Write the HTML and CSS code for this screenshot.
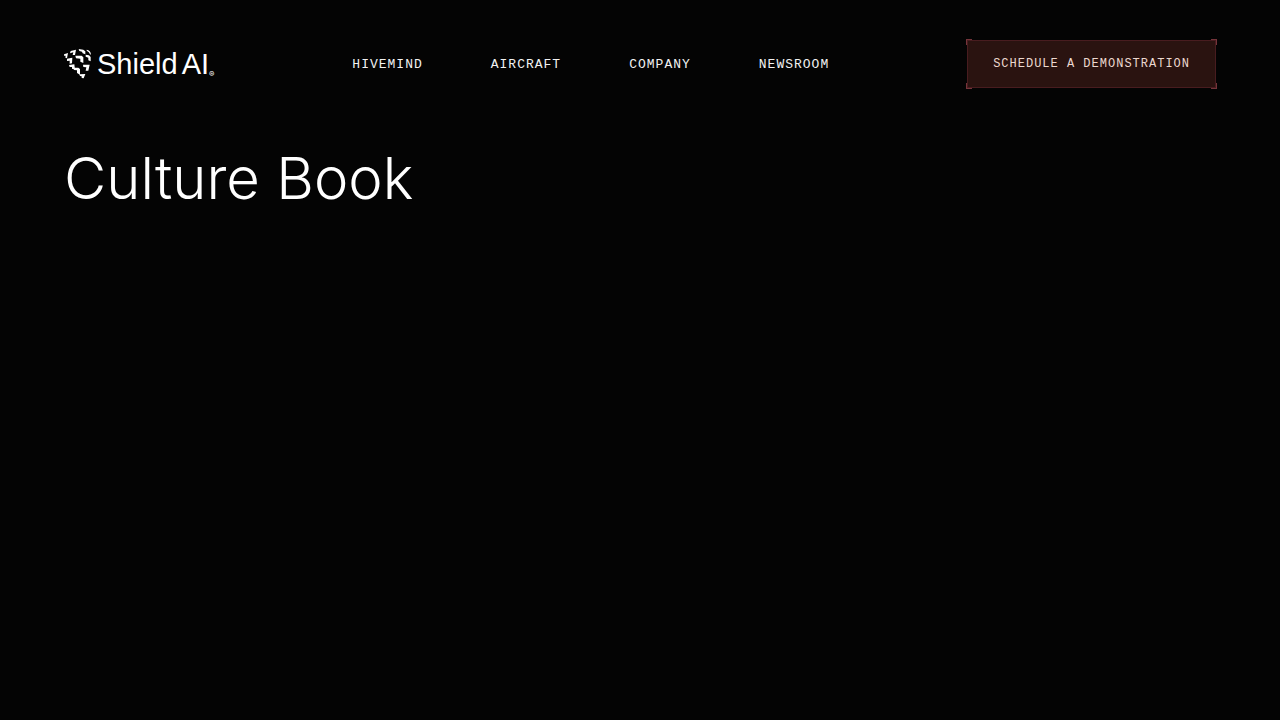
FILE: index.html
```
<!DOCTYPE html>
<html lang="en">
  <head>
    <meta charset="utf-8">
    <meta name="viewport" content="width=device-width, initial-scale=1">
    <title>Culture Book</title>
    <link rel="stylesheet" href="styles.css">
  </head>
  <body>
    <header class="site-header">
      <a href="#" class="logo">
        <svg class="logo-mark" viewBox="0 0 84 90" aria-hidden="true">
          <path d="M0 16 L12 12 L9 28 L4 26 L5 20 L1 21 Z" />
          <path d="M20 6 L36 2 L33 18 L26 18 L28 10 L18 13 Z" />
          <path d="M44 0 L58 2 L64 7 V16 L56 13 L54 8 L46 6 Z" />
          <path d="M68 2 Q80 4 81 17 L78 16 Q76 8 68 5 Z" />
          <path d="M9 29 L25 26 L24 43 L17 44 L17 35 L9 36 Z" />
          <path d="M34 20 L53 20 L58 25 V42 L49 38 V29 L36 28 Z" />
          <path d="M65 17 L75 19 L80 24 V37 L73 34 V26 L65 23 Z" />
          <path d="M15 48 L31 46 L33 62 L24 59 L24 54 L17 54 Z" />
          <path d="M57 47 L77 47 L73 65 L65 65 L67 55 L58 54 Z" />
          <path d="M27 56 L43 56 L48 60 V77 L39 72 V64 L31 63 Z" />
          <path d="M46 76 L64 75 L59 88 L53 87 L53 82 L48 81 Z" />
        </svg>
        <span class="logo-text"><span>Shield</span> <span>AI</span></span>
        <span class="logo-reg">®</span>
      </a>
      <nav class="main-nav">
        <a href="#">HIVEMIND</a>
        <a href="#">AIRCRAFT</a>
        <a href="#">COMPANY</a>
        <a href="#">NEWSROOM</a>
      </nav>
      <button type="button" class="demo-button">
        <span class="corner top-left"></span>
        <span class="corner top-right"></span>
        <span class="corner bottom-left"></span>
        <span class="corner bottom-right"></span>
        SCHEDULE A DEMONSTRATION
      </button>
    </header>
    <main class="content">
      <h1 class="page-title">Culture Book</h1>
    </main>
  </body>
</html>
```

FILE: styles.css
```
* {
  box-sizing: border-box;
}

body {
  margin: 0;
  min-height: 100vh;
  background-color: #040404;
  color: #fff;
  font-family: Inter, "Liberation Sans", sans-serif;
}

.site-header {
  display: flex;
  align-items: center;
  justify-content: space-between;
  padding: 40px 64px 0;
}

.logo {
  display: flex;
  align-items: center;
  color: #fff;
  text-decoration: none;
}

.logo-mark {
  width: 28px;
  height: 30px;
  margin-right: 5px;
  fill: #fff;
}

.logo-text {
  display: flex;
  gap: 4px;
  font-family: "Liberation Sans", Arial, sans-serif;
  font-size: 29px;
  line-height: 32px;
}

.logo-reg {
  align-self: flex-end;
  font-size: 8px;
  line-height: 12px;
}

.main-nav {
  display: flex;
  gap: 68px;
  padding-top: 2px;
}

.main-nav a {
  color: #f2f2f2;
  font-family: "Liberation Mono", "Courier New", monospace;
  font-size: 13px;
  line-height: 16px;
  letter-spacing: 1px;
  text-decoration: none;
}

.demo-button {
  position: relative;
  height: 48px;
  padding: 0 25px;
  border: 1px solid #481c1f;
  background-color: #2a1310;
  color: #ecd8cf;
  font-family: "Liberation Mono", "Courier New", monospace;
  font-size: 12px;
  line-height: 16px;
  letter-spacing: 1px;
  cursor: pointer;
}

.demo-button:hover {
  background-color: #3a1a16;
}

.corner {
  position: absolute;
  width: 6px;
  height: 6px;
  border: 0 solid #74343a;
}

.top-left {
  top: -2px;
  left: -2px;
  border-width: 1px 0 0 1px;
}

.top-right {
  top: -2px;
  right: -2px;
  border-width: 1px 1px 0 0;
}

.bottom-left {
  bottom: -2px;
  left: -2px;
  border-width: 0 0 1px 1px;
}

.bottom-right {
  right: -2px;
  bottom: -2px;
  border-width: 0 1px 1px 0;
}

.content {
  padding: 58px 64px;
}

.page-title {
  margin: 0;
  font-size: 58px;
  font-weight: 300;
  line-height: 64px;
}
```
